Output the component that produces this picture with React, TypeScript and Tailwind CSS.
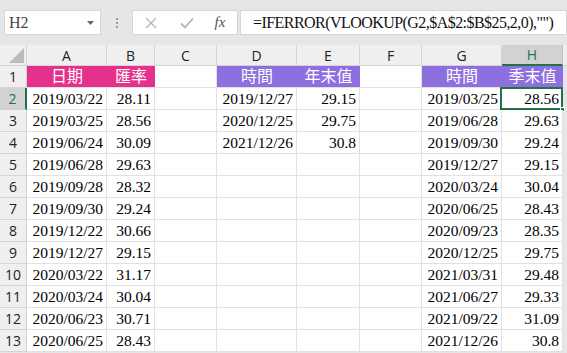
import React from "react";

const cols = ["A", "B", "C", "D", "E", "F", "G", "H"];
const widths = [80, 48, 62, 80, 63, 62, 80, 61];

const colA = ["2019/03/22","2019/03/25","2019/06/24","2019/06/28","2019/09/28","2019/09/30","2019/12/22","2019/12/27","2020/03/22","2020/03/24","2020/06/23","2020/06/25"];
const colB = ["28.11","28.56","30.09","29.63","28.32","29.24","30.66","29.15","31.17","30.04","30.71","28.43"];
const colD = ["2019/12/27","2020/12/25","2021/12/26"];
const colE = ["29.15","29.75","30.8"];
const colG = ["2019/03/25","2019/06/28","2019/09/30","2019/12/27","2020/03/24","2020/06/25","2020/09/23","2020/12/25","2021/03/31","2021/06/27","2021/09/22","2021/12/26"];
const colH = ["28.56","29.63","29.24","29.15","30.04","28.43","28.35","29.75","29.48","29.33","31.09","30.8"];

const serif = { fontFamily: '"Liberation Serif", "Times New Roman", serif' };
const cjk = { fontFamily: '"Liberation Serif", "Noto Sans CJK TC", serif' };
const sans = { fontFamily: '"Open Sans", "Liberation Sans", sans-serif' };

function headerCell(c: number, r: number): { text: string; bg: string } | null {
  if (r !== 1) return null;
  if (c === 0) return { text: "日期", bg: "bg-[#e5318c]" };
  if (c === 1) return { text: "匯率", bg: "bg-[#e5318c]" };
  if (c === 3) return { text: "時間", bg: "bg-[#8d6fdf]" };
  if (c === 4) return { text: "年末值", bg: "bg-[#8d6fdf]" };
  if (c === 6) return { text: "時間", bg: "bg-[#8d6fdf]" };
  if (c === 7) return { text: "季末值", bg: "bg-[#8d6fdf]" };
  return null;
}

function value(c: number, r: number): string {
  const i = r - 2;
  if (i < 0) return "";
  if (c === 0) return colA[i] ?? "";
  if (c === 1) return colB[i] ?? "";
  if (c === 3) return colD[i] ?? "";
  if (c === 4) return colE[i] ?? "";
  if (c === 6) return colG[i] ?? "";
  if (c === 7) return colH[i] ?? "";
  return "";
}

export default function App() {
  const rows = Array.from({ length: 13 }, (_, i) => i + 1);
  return (
    <div className="w-[567px] h-[353px] overflow-hidden bg-[#e6e6e6] flex flex-col">
      {/* formula bar */}
      <div className="h-[45px] flex items-start pt-[10px] pl-[4px] gap-0 shrink-0">
        <div className="w-[97px] h-[25px] bg-white border border-[#d6d6d6] flex items-center justify-between pl-[4px] pr-[6px]">
          <span className="text-[16px] text-[#444]" style={serif}>H2</span>
          <svg width="7" height="4" viewBox="0 0 7 4"><path d="M0 0h7L3.5 4z" fill="#666" /></svg>
        </div>
        <div className="w-[31px] h-[25px] flex items-center justify-center">
          <div className="flex flex-col gap-[2px]">
            <div className="w-[2px] h-[2px] bg-[#9a9a9a]" />
            <div className="w-[2px] h-[2px] bg-[#9a9a9a]" />
            <div className="w-[2px] h-[2px] bg-[#9a9a9a]" />
          </div>
        </div>
        <div className="w-[106px] h-[25px] bg-white border border-[#d6d6d6] flex items-center">
          <div className="w-[36px] flex justify-center">
            <svg width="12" height="12" viewBox="0 0 12 12"><path d="M1 1L11 11M11 1L1 11" stroke="#b4b4b4" strokeWidth="1.3" /></svg>
          </div>
          <div className="w-[36px] flex justify-center">
            <svg width="14" height="12" viewBox="0 0 14 12"><path d="M1 6.5L5 10.5L13 1.5" stroke="#b4b4b4" strokeWidth="1.8" fill="none" /></svg>
          </div>
          <div className="w-[30px] flex justify-center">
            <span className="italic text-[15px] text-[#555]" style={serif}>fx</span>
          </div>
        </div>
        <div className="ml-[2px] flex-1 h-[25px] bg-white border border-[#d6d6d6] flex items-center pl-[12px] overflow-hidden whitespace-nowrap">
          <span className="text-[16px] text-[#111] tracking-[-0.55px]" style={serif}>=IFERROR(VLOOKUP(G2,$A$2:$B$25,2,0),"")</span>
        </div>
      </div>

      {/* column headers */}
      <div className="flex h-[21px] shrink-0">
        <div className="w-[27px] h-full bg-[#efefef] border-r border-b border-[#d4d4d4] flex items-end justify-end p-[2px]">
          <svg width="15" height="15" viewBox="0 0 15 15"><path d="M15 0V15H0z" fill="#bcbcbc" /></svg>
        </div>
        {cols.map((c, i) => {
          const sel = c === "H";
          return (
            <div
              key={c}
              className={
                sel
                  ? "h-full bg-[#d2d2d2] border-r border-[#c6c6c6] border-b-2 border-b-[#217346] flex items-center justify-center text-[14px] text-[#217346]"
                  : "h-full bg-[#efefef] border-r border-b border-[#d4d4d4] flex items-center justify-center text-[14px] text-[#222]"
              }
              style={{ width: widths[i], ...sans }}
            >
              {c}
            </div>
          );
        })}
        <div className="flex-1 h-full bg-[#efefef] border-b border-[#d4d4d4]" />
      </div>

      {/* rows */}
      {rows.map((r) => (
        <div key={r} className="flex h-[22px] shrink-0">
          <div
            className={
              r === 2
                ? "w-[27px] h-full bg-[#d2d2d2] border-r-2 border-r-[#217346] border-b border-[#d4d4d4] flex items-center justify-center text-[14px] text-[#217346]"
                : "w-[27px] h-full bg-[#efefef] border-r border-b border-[#d4d4d4] flex items-center justify-center text-[14px] text-[#222]"
            }
            style={sans}
          >
            {r}
          </div>
          {cols.map((c, i) => {
            const h = headerCell(i, r);
            if (h) {
              return (
                <div
                  key={c}
                  className={`h-full ${h.bg} flex items-center justify-center text-[16px] text-white border-b border-[#e1e1e1]`}
                  style={{ width: widths[i], ...cjk }}
                >
                  {h.text}
                </div>
              );
            }
            const v = value(i, r);
            const selected = c === "H" && r === 2;
            return (
              <div
                key={c}
                className="relative h-full bg-white border-r border-b border-[#e1e1e1] flex items-center justify-end pr-[3px] text-[15.5px] text-black"
                style={{ width: widths[i], ...serif }}
              >
                {v}
                {selected && (
                  <>
                    <div className="absolute left-[-2px] top-[-1px] right-[-1px] bottom-[-1px] border-2 border-[#217346]" />
                    <div className="absolute right-[-3px] bottom-[-3px] w-[5px] h-[5px] bg-[#217346] border border-white" />
                  </>
                )}
              </div>
            );
          })}
          <div className="flex-1 h-full bg-[#e6e6e6]" />
        </div>
      ))}
    </div>
  );
}
